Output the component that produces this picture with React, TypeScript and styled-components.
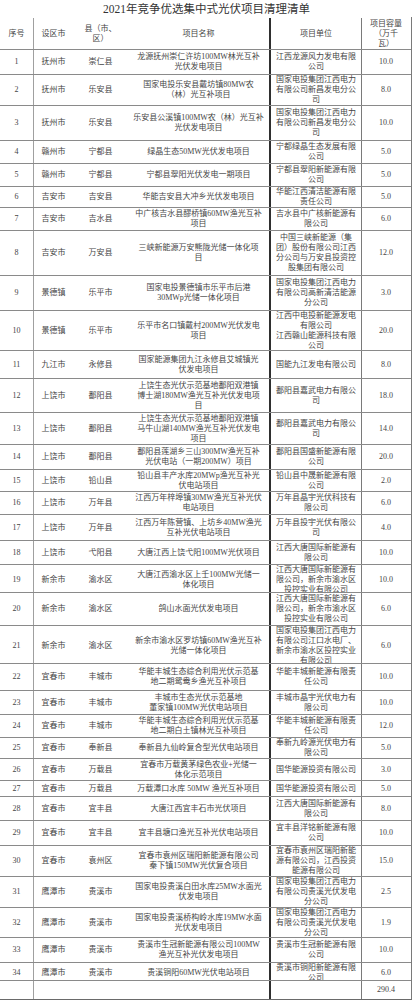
import React from 'react';
import styled, {createGlobalStyle} from 'styled-components';

type Row = {
  no: string;
  city: string;
  county: string;
  name: string[];
  unit: string[];
  cap: string;
  h: number;
};

const rows: Row[] = [
  {no: '1', city: '抚州市', county: '崇仁县', name: ['龙源抚州崇仁许坊100MW林光互补', '光伏发电项目'], unit: ['江西龙源风力发电有限', '公司'], cap: '10.0', h: 25},
  {no: '2', city: '抚州市', county: '乐安县', name: ['国家电投乐安县戴坊镇80MW农', '（林）光互补项目'], unit: ['国家电投集团江西电力', '有限公司新昌发电分公', '司'], cap: '8.0', h: 31},
  {no: '3', city: '抚州市', county: '乐安县', name: ['乐安县公溪镇100MW农（林）光互补', '光伏发电项目'], unit: ['国家电投集团江西电力', '有限公司新昌发电分公', '司'], cap: '10.0', h: 35},
  {no: '4', city: '赣州市', county: '宁都县', name: ['绿晶生态50MW光伏发电项目'], unit: ['宁都绿晶生态发展有限', '公司'], cap: '5.0', h: 23},
  {no: '5', city: '赣州市', county: '宁都县', name: ['宁都县翠阳光伏发电一期项目'], unit: ['宁都县翠阳新能源有限', '公司'], cap: '5.0', h: 23},
  {no: '6', city: '吉安市', county: '吉安县', name: ['华能吉安县大冲乡光伏发电项目'], unit: ['华能江西清洁能源有限', '责任公司'], cap: '5.0', h: 21},
  {no: '7', city: '吉安市', county: '吉水县', name: ['中广核吉水县醪桥镇60MW渔光互补', '项目'], unit: ['吉水县中广核新能源有', '限公司'], cap: '6.0', h: 23},
  {no: '8', city: '吉安市', county: '万安县', name: ['三峡新能源万安熊陇光储一体化项', '目'], unit: ['中国三峡新能源（集', '团）股份有限公司江西', '分公司与万安县投资控', '股集团有限公司'], cap: '12.0', h: 45},
  {no: '9', city: '景德镇', county: '乐平市', name: ['国家电投景德镇市乐平市后港', '30MWp光储一体化项目'], unit: ['国家电投集团江西电力', '有限公司高新清洁能源', '分公司'], cap: '3.0', h: 35},
  {no: '10', city: '景德镇', county: '乐平市', name: ['乐平市名口镇戴村200MW光伏发电', '项目'], unit: ['江西中电投新能源发电', '有限公司', '江西赣山能源科技有限', '公司'], cap: '20.0', h: 40},
  {no: '11', city: '九江市', county: '永修县', name: ['国家能源集团九江永修县艾城镇光', '伏发电项目'], unit: ['国能九江发电有限公司'], cap: '8.0', h: 28},
  {no: '12', city: '上饶市', county: '鄱阳县', name: ['上饶生态光伏示范基地鄱阳双港镇', '博士湖180MW渔光互补光伏发电项', '目'], unit: ['鄱阳县嘉武电力有限公', '司'], cap: '18.0', h: 34},
  {no: '13', city: '上饶市', county: '鄱阳县', name: ['上饶生态光伏示范基地鄱阳双港镇', '马牛山湖140MW渔光互补光伏发电', '项目'], unit: ['鄱阳县嘉武电力有限公', '司'], cap: '14.0', h: 32},
  {no: '14', city: '上饶市', county: '鄱阳县', name: ['鄱阳县莲湖乡三山300MW渔光互补', '光伏电站（一期200MW）项目'], unit: ['鄱阳县国盛新能源有限', '公司'], cap: '20.0', h: 25},
  {no: '15', city: '上饶市', county: '铅山县', name: ['铅山县丰产水库20MWp渔光互补光', '伏电站项目'], unit: ['铅山县中晟新能源有限', '公司'], cap: '2.0', h: 22},
  {no: '16', city: '上饶市', county: '万年县', name: ['江西万年梓埠镇30MW渔光互补光伏', '电站项目'], unit: ['万年县晶宇光伏科技有', '限公司'], cap: '6.0', h: 23},
  {no: '17', city: '上饶市', county: '万年县', name: ['江西万年陈营镇、上坊乡40MW渔光', '互补光伏电站项目'], unit: ['万年县投宇光伏有限公', '司'], cap: '4.0', h: 26},
  {no: '18', city: '上饶市', county: '弋阳县', name: ['大唐江西上饶弋阳100MW光伏项目'], unit: ['江西大唐国际新能源有', '限公司'], cap: '10.0', h: 24},
  {no: '19', city: '新余市', county: '渝水区', name: ['大唐江西渝水区上壬100MW光储一', '体化项目'], unit: ['江西大唐国际新能源有', '限公司，新余市渝水区', '投控实业有限公司'], cap: '10.0', h: 28},
  {no: '20', city: '新余市', county: '渝水区', name: ['鸽山水面光伏发电项目'], unit: ['江西大唐国际新能源有', '限公司，新余市渝水区', '投控实业有限公司'], cap: '6.0', h: 33},
  {no: '21', city: '新余市', county: '渝水区', name: ['新余市渝水区罗坊镇60MW渔光互补', '光储一体化项目'], unit: ['国家电投集团江西电力', '有限公司江口水电厂、', '新余市渝水区投控实业', '有限公司'], cap: '6.0', h: 38},
  {no: '22', city: '宜春市', county: '丰城市', name: ['华能丰城生态综合利用光伏示范基', '地二期鸳鸯乡渔光互补项目'], unit: ['华能丰城新能源有限责', '任公司'], cap: '10.0', h: 27},
  {no: '23', city: '宜春市', county: '丰城市', name: ['丰城市生态光伏示范基地', '董家镇100MW光伏电站项目'], unit: ['丰城市晶宇光伏电力有', '限公司'], cap: '10.0', h: 24},
  {no: '24', city: '宜春市', county: '丰城市', name: ['华能丰城生态综合利用光伏示范基', '地二期白土镇林光互补项目'], unit: ['华能丰城新能源有限责', '任公司'], cap: '12.0', h: 23},
  {no: '25', city: '宜春市', county: '奉新县', name: ['奉新县九仙岭复合型光伏电站项目'], unit: ['奉新九岭源光伏电力有', '限公司'], cap: '5.0', h: 21},
  {no: '26', city: '宜春市', county: '万载县', name: ['宜春市万载黄茅绿色农业+光储一', '体化示范项目'], unit: ['国华能源投资有限公司'], cap: '3.0', h: 22},
  {no: '27', city: '宜春市', county: '万载县', name: ['万载潭口水库 50MW 渔光互补项目'], unit: ['国华能源投资有限公司'], cap: '5.0', h: 16},
  {no: '28', city: '宜春市', county: '宜丰县', name: ['大唐江西宜丰石市光伏项目'], unit: ['江西大唐国际新能源有', '限公司'], cap: '8.0', h: 24},
  {no: '29', city: '宜春市', county: '宜丰县', name: ['宜丰县塘口渔光互补光伏电站项目'], unit: ['宜丰县洋铭新能源有限', '公司'], cap: '10.0', h: 25},
  {no: '30', city: '宜春市', county: '袁州区', name: ['宜春市袁州区瑞阳新能源有限公司', '秦下镇150MW光伏复合项目'], unit: ['宜春市袁州区瑞阳新能', '源有限公司，江西投资', '能源有限公司'], cap: '15.0', h: 31},
  {no: '31', city: '鹰潭市', county: '贵溪市', name: ['国家电投贵溪白田水库25MW水面光', '伏发电项目'], unit: ['国家电投集团江西电力', '有限公司贵溪光伏发电', '分公司'], cap: '2.5', h: 31},
  {no: '32', city: '鹰潭市', county: '贵溪市', name: ['国家电投贵溪桥构岭水库19MW水面', '光伏发电项目'], unit: ['国家电投集团江西电力', '有限公司贵溪光伏发电', '分公司'], cap: '1.9', h: 30},
  {no: '33', city: '鹰潭市', county: '贵溪市', name: ['贵溪市生冠新能源有限公司100MW', '渔光互补光伏发电项目'], unit: ['贵溪市生冠新能源有限', '公司'], cap: '10.0', h: 25},
  {no: '34', city: '鹰潭市', county: '贵溪市', name: ['贵溪铜阳60MW光伏电站项目'], unit: ['贵溪市铜阳新能源有限', '公司'], cap: '6.0', h: 18},
];

const Lines = ({lines}: {lines: string[]}) => (
  <div>
    {lines.map((l, i) => (
      <Line key={i}>{l}</Line>
    ))}
  </div>
);

const App = () => (
  <>
    <GlobalStyle />
    <Page>
      <Title>2021年竞争优选集中式光伏项目清理清单</Title>
      <Table>
        <RowBox $h={32} $head>
          <Cell $col={0}>序号</Cell>
          <Cell $col={1}>设区市</Cell>
          <Cell $col={2}>
            <Lines lines={['县（市、', '区）']} />
          </Cell>
          <Cell $col={3}>项目名称</Cell>
          <Cell $col={4}>项目单位</Cell>
          <Cell $col={5}>
            <Lines lines={['项目容量', '（万千', '瓦）']} />
          </Cell>
        </RowBox>
        {rows.map((r) => (
          <RowBox key={r.no} $h={r.h}>
            <Cell $col={0}>{r.no}</Cell>
            <Cell $col={1}>{r.city}</Cell>
            <Cell $col={2}>{r.county}</Cell>
            <Cell $col={3}>
              <Lines lines={r.name} />
            </Cell>
            <Cell $col={4}>
              <Lines lines={r.unit} />
            </Cell>
            <Cell $col={5}>{r.cap}</Cell>
          </RowBox>
        ))}
        <RowBox $h={19}>
          <Cell $col={0} />
          <Cell $col={1} />
          <Cell $col={2} />
          <Cell $col={3} />
          <Cell $col={4} />
          <Cell $col={5}>290.4</Cell>
        </RowBox>
      </Table>
    </Page>
  </>
);

const GlobalStyle = createGlobalStyle`
  html, body {
    margin: 0;
    padding: 0;
    background: #fff;
  }
`;

const Page = styled.div`
  width: 413px;
  height: 1000px;
  overflow: hidden;
  color: #454545;
  font-family: 'Liberation Serif', 'Noto Sans CJK SC', serif;
`;

const Title = styled.div`
  height: 17px;
  line-height: 18px;
  text-align: center;
  font-size: 11.5px;
  color: #333;
`;

const Table = styled.div`
  width: 411px;
  display: flex;
  flex-direction: column;
  font-size: 8px;
  line-height: 10px;
  border-right: 1px solid #7a7a7a;
  border-bottom: 1px solid #6a6a6a;
`;

const RowBox = styled.div<{$h: number; $head?: boolean}>`
  display: grid;
  grid-template-columns: 33px 40px 55px 141px 92px 49px;
  height: ${({$h}) => $h}px;
  border-top: 1px solid ${({$head}) => ($head ? 'transparent' : '#8a8a8a')};
  box-sizing: border-box;
`;

const Cell = styled.div<{$col: number}>`
  display: flex;
  align-items: center;
  justify-content: center;
  text-align: center;
  white-space: nowrap;
  min-width: 0;
  border-left: ${({$col}) =>
    $col === 1 ? '1px solid #a0a0a0' : $col === 4 ? '2px solid #2f2f2f' : $col === 5 ? '1px solid #7a7a7a' : 'none'};
`;

const Line = styled.div`
  display: block;
`;

export default App;
